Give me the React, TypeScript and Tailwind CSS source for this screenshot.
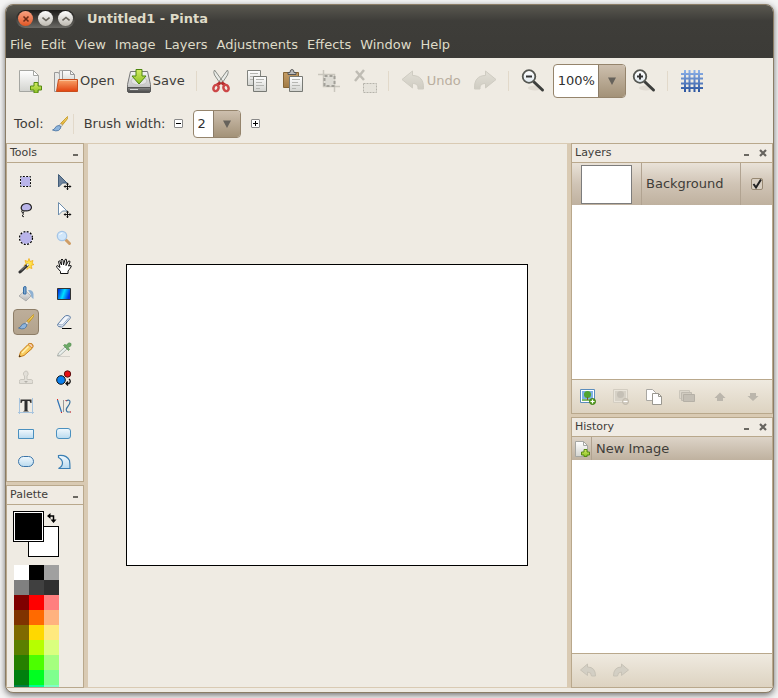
import type { ReactNode } from "react";

type IconProps = { children: ReactNode; size?: 16 | 24 };

function Icon({ children, size = 16 }: IconProps) {
  return (
    <svg
      className={size === 24 ? "size-6 shrink-0" : "size-4 shrink-0"}
      viewBox={size === 24 ? "0 0 24 24" : "0 0 16 16"}
      fill="none"
      aria-hidden="true"
    >
      {children}
    </svg>
  );
}

function Gradients() {
  const list: [string, string, string][] = [
    ["paper", "#ffffff", "#d2d3cf"],
    ["orange", "#f9a56b", "#e2430f"],
    ["green", "#d4ec62", "#8bc024"],
    ["metal", "#f4f4f4", "#b4b4b4"],
    ["dark", "#8a8a8a", "#454545"],
    ["lens", "#ffffff", "#dfe8ee"],
    ["board", "#c59d66", "#a07a44"],
    ["gridblue", "#8fb3ea", "#2c559f"],
    ["sky", "#f2f9fd", "#b9daef"],
    ["fade", "#e2dfd6", "#cfccc2"],
    ["gold", "#fbe27c", "#dca62a"],
  ];
  return (
    <svg className="absolute size-0" aria-hidden="true">
      <defs>
        {list.map(([id, a, b]) => (
          <linearGradient key={id} id={id} x1="0" y1="0" x2="0" y2="1">
            <stop offset="0" stopColor={a} />
            <stop offset="1" stopColor={b} />
          </linearGradient>
        ))}
        <linearGradient id="spectrum" x1="0" y1="0" x2="1" y2="0.3">
          <stop offset="0" stopColor="#0008d8" />
          <stop offset="0.55" stopColor="#00e0ff" />
          <stop offset="1" stopColor="#0030e8" />
        </linearGradient>
      </defs>
    </svg>
  );
}

/* ---------- toolbar icons ---------- */

const NewIcon = (
  <Icon size={24}>
    <path d="M1.500 1.500h14l5 5v16h-19z" fill="url(#paper)" stroke="#a5a6a2" />
    <path d="M15.500 1.500v5h5z" fill="#fff" stroke="#a5a6a2" strokeLinejoin="round" />
    <path d="M16 13.500h4v3.500h3.500v4H20v3h-4v-3h-3.500v-4H16z" fill="url(#green)" stroke="#568a12" />
  </Icon>
);
const OpenIcon = (
  <Icon size={24}>
    <path d="M.5 3.500h4l1 2h3v17h-8z" fill="#e8e8e6" stroke="#999" />
    <path d="M5.500 1.500h9v12h-9z" fill="#eee" stroke="#aaa" />
    <path d="M8.500 1.500h8l4 4v8h-12z" fill="url(#paper)" stroke="#999" />
    <path d="M16.500 1.500v4h4" stroke="#999" />
    <path d="M4.500 10.500h19v12h-21z" fill="url(#orange)" stroke="#c84d1c" />
    <path d="M5.500 11.500h17" stroke="#fbc49c" />
  </Icon>
);
const SaveIcon = (
  <Icon size={24}>
    <path d="M3.500 2.500h17l3 13v6q0 2-2 2h-19q-2 0-2-2v-6z" fill="url(#metal)" stroke="#777" />
    <path d="M.5 18.500h23v3q0 2-2 2h-19q-2 0-2-2z" fill="url(#dark)" stroke="#555" />
    <path d="M3 20.500h8" stroke="#d8d8d8" />
    <ellipse cx="12" cy="12" rx="8" ry="4" fill="#e4e4e4" stroke="#c2c2c2" />
    <path d="M9 .5h6V7h4l-7 8-7-8h4z" fill="url(#green)" stroke="#4d860c" />
  </Icon>
);
const CutIcon = (
  <Icon size={24}>
    <path d="M5.500 1q-1.500 2 0 5l6 9 2-3zM18.500 1q1.500 2 0 5l-6 9-2-3z" fill="#e9ebe7" stroke="#8b8e88" />
    <path d="m11.500 13.500-4 3M12.500 13.500l4 3" stroke="#b82c2c" strokeWidth="3" />
    <ellipse cx="7" cy="19" rx="2.500" ry="3.200" transform="rotate(25 7 19)" stroke="#cc4747" strokeWidth="2.500" />
    <ellipse cx="17" cy="19" rx="2.500" ry="3.200" transform="rotate(-25 17 19)" stroke="#cc4747" strokeWidth="2.500" />
  </Icon>
);
const CopyIcon = (
  <Icon size={24}>
    <path d="M2.500 1.500h13v15h-13z" fill="url(#paper)" stroke="#81837e" />
    <path d="M5 4.500h8M5 7.500h6M5 10.500h3" stroke="#b5b6b2" />
    <path d="M8.500 7.500h13v15h-13z" fill="url(#paper)" stroke="#777974" />
    <path d="M11 10.500h8M11 13.500h6M11 16.500h8M11 19.500h4" stroke="#b5b6b2" />
  </Icon>
);
const PasteIcon = (
  <Icon size={24}>
    <path d="M2.500 3.500h15v15h-15z" fill="url(#board)" stroke="#856434" />
    <path d="M7 5.500v-2h2q0-3 2-3t2 3h2v2z" fill="#bbb" stroke="#555" />
    <path d="M8.500 7.500h13v15h-13z" fill="url(#paper)" stroke="#777974" />
    <path d="M11 10.500h8M11 13.500h6M11 16.500h8M11 19.500h4" stroke="#b5b6b2" />
  </Icon>
);
const CropIcon = (
  <Icon size={24}>
    <path d="M1 5.500h16.500V23M6.500 1v16.500H23" stroke="#c9c6bd" strokeWidth="1.500" />
    <rect x="7.500" y="7" width="10" height="10" fill="#dddbd4" stroke="#a3a19a" strokeWidth="2" strokeDasharray="3 2" />
  </Icon>
);
const DeselectIcon = (
  <Icon size={24}>
    <path d="m3 2 8 9M11 1 2 12" stroke="#bfbcb4" strokeWidth="2.500" />
    <rect x="10.500" y="14.500" width="13" height="9" fill="#e6e3db" stroke="#b5b2aa" strokeDasharray="2 1" />
  </Icon>
);
const arrowPath = "M1 10.500 11.500 2V6.500C19 6.500 23 11 22.500 20H17c0-4-1.500-5.500-5.500-5.500V19z";
const UndoIcon = (
  <Icon size={24}>
    <path d={arrowPath} fill="url(#fade)" stroke="#cfccc2" strokeLinejoin="round" />
  </Icon>
);
const RedoIcon = (
  <Icon size={24}>
    <path d={arrowPath} transform="translate(24) scale(-1 1)" fill="url(#fade)" stroke="#cfccc2" strokeLinejoin="round" />
  </Icon>
);
function Magnifier({ plus }: { plus: boolean }) {
  return (
    <Icon size={24}>
      <ellipse cx="14" cy="19" rx="7" ry="2.500" fill="#e0dbd2" />
      <path d="m13 13 8.500 8" stroke="#3c3e3c" strokeWidth="3" strokeLinecap="round" />
      <circle cx="8" cy="7.500" r="6.300" fill="url(#lens)" stroke="#555752" strokeWidth="1.800" />
      <path d={plus ? "M5 7.500h6M8 4.500v6" : "M5 7.500h6"} stroke="#333" strokeWidth="2" />
    </Icon>
  );
}
const GridIcon = (
  <Icon size={24}>
    <path
      d="M4 1h2v22H4zM8.500 1h2v22h-2zM13.500 1h2v22h-2zM18 1h2v22h-2zM1 4h22v2H1zM1 8.500h22v2H1zM1 13.500h22v2H1zM1 18h22v2H1z"
      fill="url(#gridblue)"
    />
  </Icon>
);

/* ---------- tool icons ---------- */

const cursorCross = (
  <>
    <path d="M8 12.500h7M11.500 9v7" stroke="#111" />
    <path d="M10 10.500 11.500 8.500l1.500 2zM10 14.500l1.500 1.500 1.500-1.500zM9.500 11l-2 1.500 2 1.500zM13.500 11l2 1.500-2 1.500z" fill="#111" />
  </>
);
const BrushIcon = (
  <Icon>
    <path d="M15.500.5q1 1-1 3.500l-4.500 5.500L8 8z" fill="url(#gold)" stroke="#bf921e" strokeWidth=".8" />
    <path d="m8.500 7.500 2 1.500-1.500 2L7 9.500z" fill="#e4e4e4" stroke="#999" strokeWidth=".5" />
    <path d="M7 9.500Q4 9.500 3 12q-.5 1.500-2.500 2 3.500 1.500 6 .5 2-1 2.500-4z" fill="#8fb5dc" stroke="#44709f" strokeWidth=".8" />
  </Icon>
);

const tools: { name: string; icon: ReactNode; off?: boolean }[] = [
  {
    name: "Rectangle Select",
    icon: (
      <Icon>
        <path d="M2.500 2.500h10v10h-10z" fill="#b9b4ea" stroke="#fff" />
        <path d="M2.500 2.500h10v10h-10z" stroke="#000" strokeDasharray="2 1.330" strokeDashoffset="1" />
      </Icon>
    ),
  },
  {
    name: "Move Selected Pixels",
    icon: (
      <Icon>
        <path d="M2.500.5 11 9H6.500l-4 4z" fill="#6d829b" stroke="#415c78" />
        {cursorCross}
      </Icon>
    ),
  },
  {
    name: "Lasso Select",
    icon: (
      <Icon>
        <path d="M4 8Q2 5 5 2.500q4-2 7 0 3 3 0 5.500-3 1.500-7 .5z" fill="#b9b4ea" stroke="#222" strokeWidth="1.200" />
        <path d="M5 8.500q2 1 0 2.500-2-.5-1-2.500M5 11q1 2-1 3 1 0 2 1" stroke="#222" />
      </Icon>
    ),
  },
  {
    name: "Move Selection",
    icon: (
      <Icon>
        <path d="M2.500.5 11 9H6.500l-4 4z" fill="#fff" stroke="#6d8dac" />
        {cursorCross}
      </Icon>
    ),
  },
  {
    name: "Ellipse Select",
    icon: (
      <Icon>
        <circle cx="8" cy="8" r="6.500" fill="#b9b4ea" stroke="#fff" />
        <circle cx="8" cy="8" r="6.500" stroke="#000" strokeWidth="1.200" strokeDasharray="2 1.400" />
      </Icon>
    ),
  },
  {
    name: "Zoom",
    icon: (
      <Icon>
        <path d="m10 10 3.500 3.500" stroke="#cf9d66" strokeWidth="3" strokeLinecap="round" />
        <circle cx="6" cy="6" r="4.700" fill="#d0e6fa" stroke="#a5c5e6" strokeWidth="1.300" />
        <path d="M3.500 5q1-2 3-2" stroke="#fff" />
      </Icon>
    ),
  },
  {
    name: "Magic Wand",
    icon: (
      <Icon>
        <path d="m11 .500 1 3 3-1-1 3 2 1-3 1 1 3-3-1-2 2v-3l-3-1 2-2-1-3 3 1z" fill="#ffe34a" stroke="#f2ad16" strokeWidth=".8" />
        <path d="m2 14 7.500-7" stroke="#333" strokeWidth="3" strokeLinecap="round" />
        <path d="m3 12.500 4.500-4.500" stroke="#999" />
        <path d="m9 7.500 1.500-1.500" stroke="#eee" strokeWidth="2" />
      </Icon>
    ),
  },
  {
    name: "Pan",
    icon: (
      <Icon>
        <path
          d="M4.500 15.500v-2L1 9.500q-1-2 .5-2L4 9.500 2.500 3.500q.5-1.500 1.500 0L5.500 7 5 2q1-2 2 0l.5 5L9 1.500q1.500-1 1.500.5L10 7.500 12.500 3q1.500-.5 1.500 1l-1.500 4 1.500-.5q2 0 1 1.500-2 3-3 4v2.500z"
          fill="#fff"
          stroke="#111"
        />
      </Icon>
    ),
  },
  {
    name: "Paint Bucket",
    icon: (
      <Icon>
        <path d="M10 4q5-.5 5.500 4v5q-2.500-1-3-5z" fill="#8fb1d2" />
        <path d="m7 4.500 6 5.500L8 15 1 10z" fill="url(#metal)" stroke="#a5a5a5" strokeWidth=".8" />
        <path d="M5.500 8V2Q5.500.5 7 .5T8 2v6z" fill="#7da7cf" stroke="#376da4" />
      </Icon>
    ),
  },
  {
    name: "Gradient",
    icon: (
      <Icon>
        <path d="M1.500 2.500h13v11h-13z" fill="url(#spectrum)" stroke="#333" />
      </Icon>
    ),
  },
  { name: "Paintbrush", icon: BrushIcon },
  {
    name: "Eraser",
    icon: (
      <Icon>
        <path d="M6 14.500h9.500" stroke="#000" />
        <path d="m1.500 10.500 6.500-7.500q1.500-1.500 3-1.500l2.500.5q1.500 1 .5 2.500L7.500 12q-1 1-2 1l-3-.500q-1-1-1-2z" fill="#f2f5fa" stroke="#5b7ba4" />
        <path d="m1.500 10.500 5 .5L13 3.500" stroke="#7e97b8" strokeWidth=".8" />
      </Icon>
    ),
  },
  {
    name: "Pencil",
    icon: (
      <Icon>
        <path d="m1 15 1.500-5L10 2.500q1-1.500 3-1t2 2q0 2-1 3L6 13.500z" fill="#f9cd61" stroke="#c77b16" />
        <path d="m10 2.500 4 3.500q1.500-1.500.5-3-1.500-2-3-1.500z" fill="#f6cdb0" stroke="#c77b16" strokeWidth=".7" />
        <path d="m4 11 6.500-6.500" stroke="#fff1b4" strokeWidth="1.500" />
        <path d="m1 15 .5-2 1.500 1.500z" fill="#222" />
      </Icon>
    ),
  },
  {
    name: "Color Picker",
    icon: (
      <Icon>
        <path d="M2 14.500h12" stroke="#d4d1ca" />
        <path d="m1.500 14 1-3L9 5l2 2-6.500 6z" fill="#e9efec" stroke="#a5aba6" strokeWidth=".9" />
        <path d="m7.500 3.500 5 5 1-1-1.500-2q4-1 3-4-2-2-4.500 1.500L8.500 2.500z" fill="#6eaa68" stroke="#5a9256" strokeWidth=".7" />
      </Icon>
    ),
  },
  {
    name: "Clone Stamp",
    off: true,
    icon: (
      <Icon>
        <path d="M6.500 9.500V6Q5 5 5.500 3q1-2 2.500-2t2 2q.5 2-1 3v3.500h4.500q1 0 1 2v2h-13v-2q0-2 1-2z" fill="#e2dfd8" stroke="#c9c6be" />
        <path d="M6 11h4l-2 2z" fill="#b3b1aa" />
      </Icon>
    ),
  },
  {
    name: "Recolor",
    icon: (
      <Icon>
        <circle cx="11.500" cy="4" r="3.200" fill="#e50e12" stroke="#5c1011" />
        <circle cx="5" cy="10" r="4.300" fill="#0b80ee" stroke="#111" />
        <path d="M13 9q2.500 2 0 4.500h-2.500M12 11.500l-2 2 2 2" stroke="#111" strokeWidth="1.300" />
      </Icon>
    ),
  },
  {
    name: "Text",
    icon: (
      <Icon>
        <path d="M1.500 0v16M14.500 0v16M0 14.500h16" stroke="#a7c4de" />
        <path d="M2.500 1.500h11V5h-1l-1-2H9.500v9.500l1.500 1h-6l1.500-1V3H4.500l-1 2h-1z" fill="#2d2d2d" />
      </Icon>
    ),
  },
  {
    name: "Line / Curve",
    icon: (
      <Icon>
        <path d="m1.500 2 4 12" stroke="#2c71b5" strokeWidth="1.200" />
        <path d="M7.500 2v12" stroke="#999" />
        <path d="M10 3q4-2 4 1 0 2-2.500 5t0 5h3" stroke="#39729f" strokeWidth="1.200" />
        <path d="M1 1h1v1H1zM5 14h1v1H5zM9.500 2h1v1h-1zM14 13.500h1v1h-1z" fill="#d22" />
      </Icon>
    ),
  },
  {
    name: "Rectangle",
    icon: (
      <Icon>
        <path d="M.5 3.500h15v9H.5z" fill="url(#sky)" stroke="#4a90bf" />
      </Icon>
    ),
  },
  {
    name: "Rounded Rectangle",
    icon: (
      <Icon>
        <rect x=".5" y="2.500" width="14" height="10" rx="2.500" fill="url(#sky)" stroke="#4a90bf" />
      </Icon>
    ),
  },
  {
    name: "Ellipse",
    icon: (
      <Icon>
        <rect x=".5" y="2.500" width="15" height="10" rx="5" fill="url(#sky)" stroke="#3a74a8" />
      </Icon>
    ),
  },
  {
    name: "Freeform Shape",
    icon: (
      <Icon>
        <path d="M2.500 1.500q8-1 11 5 .5 3 .5 8H2.500q4-2 4-5.500t-4-5.500z" fill="url(#sky)" stroke="#3a7fb4" strokeWidth="1.200" />
      </Icon>
    ),
  },
];

/* ---------- panel icons ---------- */

const DocAddIcon = (
  <Icon>
    <path d="M1.500.5h8l4 4v11h-12z" fill="url(#paper)" stroke="#a5a6a2" />
    <path d="M9.500.5v4h4" stroke="#a5a6a2" />
    <path d="M10 8.500h3V11h2.500v3H13v1.500h-3V14H7.500v-3H10z" fill="url(#green)" stroke="#568a12" />
  </Icon>
);
const LayerAddIcon = (
  <Icon>
    <path d="M.5.500h14v13H.5z" fill="#fff" stroke="#5b8dbd" />
    <path d="M2 2h11v10H2z" fill="#7fb0e4" />
    <path d="M2 10h11v2H2z" fill="#7fb86a" />
    <circle cx="7.500" cy="5.500" r="3.500" fill="#51a52e" />
    <path d="M7 8h1v3H7z" fill="#7b5a28" />
    <circle cx="12.500" cy="12.500" r="3" fill="#5fa526" stroke="#3d7d14" />
    <path d="M10.500 12.500h4M12.500 10.500v4" stroke="#fff" strokeWidth="1.200" />
  </Icon>
);
const LayerRemoveIcon = (
  <Icon>
    <path d="M.5.500h14v13H.5z" fill="#e9e4da" stroke="#d3cdc1" />
    <path d="M2 2h11v10H2z" fill="#d6d1c6" />
    <circle cx="7.500" cy="5.500" r="3.500" fill="#c5c0b6" />
    <circle cx="12.500" cy="12.500" r="3" fill="#d2ccc0" stroke="#bfb8ab" />
    <path d="M10.500 12.500h4" stroke="#fff" />
  </Icon>
);
const DuplicateIcon = (
  <Icon>
    <path d="M.5.500h6l3 3v8h-9z" fill="#fff" stroke="#aaa8a3" />
    <path d="M6.500 4.500h6l3 3v8h-9z" fill="#fff" stroke="#99978f" />
    <path d="M12.500 4.500v3h3" stroke="#99978f" />
  </Icon>
);
const MergeIcon = (
  <Icon>
    <path d="M.5 1.500h10v8H.5z" fill="#dcd7cc" stroke="#cbc6bb" />
    <path d="M2.500 3.500h10v8h-10z" fill="#d0cbc0" stroke="#bfbab0" />
    <path d="M4.500 5.500h11v7h-11z" fill="#c4bfb5" stroke="#b5b0a6" />
  </Icon>
);
const UpIcon = (
  <Icon>
    <path d="m8 3.500 5.500 5.500H11v3H5V9H2.500z" fill="#bbb6ac" />
  </Icon>
);
const DownIcon = (
  <Icon>
    <path d="M8 12 2.500 7H5V4h6v3h2.500z" fill="#bbb6ac" />
  </Icon>
);
const smallArrow = "M.5 7 7.500 1v3q8 0 8 9h-4q0-4-4-4v3.500z";
const SmallUndo = (
  <Icon>
    <path d={smallArrow} fill="#d3cfc4" stroke="#c7c2b6" />
  </Icon>
);
const SmallRedo = (
  <Icon>
    <path d={smallArrow} transform="translate(16) scale(-1 1)" fill="#d3cfc4" stroke="#c7c2b6" />
  </Icon>
);

/* ---------- building blocks ---------- */

function ToolButton({ label, icon, text, off }: { label: string; icon: ReactNode; text?: string; off?: boolean }) {
  return (
    <button
      type="button"
      aria-label={label}
      disabled={off}
      className="flex h-9 shrink-0 items-center gap-0.5 px-1.5 text-[#3f3d39] disabled:text-[#b9ae9f]"
    >
      {icon}
      {text && <span>{text}</span>}
    </button>
  );
}

function Separator() {
  return (
    <div className="flex h-5 w-3 shrink-0 justify-center">
      <div className="w-px bg-[#e2d9ca]" />
    </div>
  );
}

function Combo({ label, value, options, wide }: { label: string; value: string; options: string[]; wide?: boolean }) {
  return (
    <div
      className={
        "relative shrink-0 overflow-hidden rounded border border-[#95846c] bg-white " + (wide ? "h-[34px] w-[73px]" : "h-7 w-12")
      }
    >
      <select aria-label={label} defaultValue={value} className="h-full w-full appearance-none bg-transparent pl-1 text-[#2f2f2f] outline-none">
        {options.map((o) => (
          <option key={o}>{o}</option>
        ))}
      </select>
      <div className="pointer-events-none absolute inset-y-0 right-0 flex w-[27px] items-center justify-center border-l border-[#8b7c68] bg-linear-to-b from-[#cdbfae] to-[#a39278]">
        <svg className="size-2" viewBox="0 0 8 8" aria-hidden="true">
          <path d="M0 .5h8L4 8z" fill="#66625b" />
        </svg>
      </div>
    </div>
  );
}

function StepButton({ label, d }: { label: string; d: string }) {
  return (
    <button type="button" aria-label={label} className="flex size-[9px] shrink-0 items-center justify-center rounded-[1px] border border-[#888] bg-white">
      <svg className="size-[7px] shrink-0" viewBox="0 0 7 7" aria-hidden="true">
        <path d={d} fill="#000" />
      </svg>
    </button>
  );
}

function PanelHeader({ title, closable }: { title: string; closable?: boolean }) {
  return (
    <header className="flex h-5 shrink-0 items-center gap-2.5 border-y border-[#b9a88c] bg-[#f0ebe3] pr-[5px] pl-[3px] text-[11px] leading-4">
      <h2 className="flex-1">{title}</h2>
      <button type="button" aria-label={"Minimise " + title} className="flex h-1.5 w-[5px] items-end">
        <span className="h-0.5 w-full bg-[#6b6862]" />
      </button>
      {closable && (
        <button type="button" aria-label={"Close " + title}>
          <svg className="size-2" viewBox="0 0 8 8" aria-hidden="true">
            <path d="m1 1 6 6M7 1 1 7" stroke="#66635e" strokeWidth="2.200" />
          </svg>
        </button>
      )}
    </header>
  );
}

function SmallButton({ label, icon, off }: { label: string; icon: ReactNode; off?: boolean }) {
  return (
    <button type="button" aria-label={label} disabled={off} className="flex h-8 w-[33px] items-center pl-2">
      {icon}
    </button>
  );
}

function WindowButton({ label, close, d }: { label: string; close?: boolean; d: string }) {
  return (
    <button
      type="button"
      aria-label={label}
      className={
        "flex size-[15px] items-center justify-center rounded-full bg-linear-to-b " +
        (close ? "from-[#f8a181] to-[#e0551f]" : "from-white to-[#bdb9b0]")
      }
    >
      <svg className="size-2" viewBox="0 0 8 8" fill="none" aria-hidden="true">
        <path d={d} stroke={close ? "#6b2b17" : "#66625a"} strokeWidth="1.600" />
      </svg>
    </button>
  );
}

const menus = ["File", "Edit", "View", "Image", "Layers", "Adjustments", "Effects", "Window", "Help"];

const palette = [
  "#ffffff", "#000000", "#a0a0a0",
  "#808080", "#404040", "#303030",
  "#7f0000", "#ff0000", "#ff7f7f",
  "#7f3300", "#ff6a00", "#ffb27f",
  "#7f6a00", "#ffd800", "#ffe97f",
  "#5b7f00", "#b6ff00", "#daff7f",
  "#267f00", "#4cff00", "#a5ff7f",
  "#007f0e", "#00ff21", "#7fff8e",
  "#007f46", "#00ff90", "#7fffc5",
];

export default function App() {
  return (
    <div className="h-screen bg-[#f4f4f4] pt-1 pr-1 pb-[5px] pl-[5px] font-['DejaVu_Sans','Liberation_Sans',sans-serif] text-[13px] leading-5 text-[#3f3d39]">
      <Gradients />
      <div className="flex h-full flex-col overflow-hidden rounded-lg border border-[#8b7d66] bg-[#efebe3] shadow-[0_2px_6px_rgba(0,0,0,0.55)]">
        <div className="shrink-0 bg-linear-to-b from-[#5a5850] via-[#3e3d39] via-30% to-[#3c3b37] text-[#dfdbc8]">
          <div className="flex h-[27px] items-center gap-3 pl-2.5">
            <div className="flex h-[18px] items-center gap-[5px] rounded-full bg-linear-to-b from-[#1d1c1a] to-[#6b6a65] px-0.5">
              <WindowButton label="Close" close d="m1.500 1.500 5 5M6.500 1.500l-5 5" />
              <WindowButton label="Minimise" d="m.5 2.500 3.500 3 3.500-3" />
              <WindowButton label="Maximise" d="m.5 5.500 3.500-3 3.500 3" />
            </div>
            <h1 className="font-bold">Untitled1 - Pinta</h1>
          </div>
          <nav className="flex h-[26px] items-center gap-px">
            {menus.map((m) => (
              <button key={m} type="button" className="px-1">
                {m}
              </button>
            ))}
          </nav>
        </div>

        <div className="flex h-[46px] shrink-0 items-center pl-1.5">
          <ToolButton label="New" icon={NewIcon} />
          <ToolButton label="Open" icon={OpenIcon} text="Open" />
          <ToolButton label="Save" icon={SaveIcon} text="Save" />
          <Separator />
          <ToolButton label="Cut" icon={CutIcon} />
          <ToolButton label="Copy" icon={CopyIcon} />
          <ToolButton label="Paste" icon={PasteIcon} />
          <ToolButton label="Crop to Selection" icon={CropIcon} off />
          <ToolButton label="Deselect" icon={DeselectIcon} off />
          <Separator />
          <ToolButton label="Undo" icon={UndoIcon} text="Undo" off />
          <ToolButton label="Redo" icon={RedoIcon} off />
          <Separator />
          <ToolButton label="Zoom Out" icon={<Magnifier plus={false} />} />
          <div className="pl-0.5">
            <Combo label="Zoom" value="100%" options={["200%", "100%", "50%"]} wide />
          </div>
          <ToolButton label="Zoom In" icon={<Magnifier plus />} />
          <Separator />
          <ToolButton label="Pixel Grid" icon={GridIcon} />
        </div>

        <div className="flex h-[39px] shrink-0 items-center pl-2">
          <span className="pr-2">Tool:</span>
          {BrushIcon}
          <Separator />
          <span className="pr-2 pl-1">Brush width:</span>
          <StepButton label="Decrease brush width" d="M1 3h5v1H1z" />
          <div className="px-2.5">
            <Combo label="Brush width" value="2" options={["1", "2", "3", "4", "5"]} />
          </div>
          <StepButton label="Increase brush width" d="M3 1h1v2h2v1H4v2H3V4H1V3h2z" />
        </div>

        <div className="flex min-h-0 flex-1">
          <aside className="flex w-[82px] shrink-0 flex-col gap-[3px] border-r-4 border-[#d9cab3] bg-[#d9cab3]">
            <section className="shrink-0 border-x border-b border-[#b9a88c] bg-[#efebe3]">
              <PanelHeader title="Tools" />
              <div className="grid grid-cols-2 py-[5px]">
                {tools.map((t) => (
                  <div key={t.name} className="flex h-7 items-center justify-center">
                    <button
                      type="button"
                      aria-label={t.name}
                      disabled={t.off}
                      className={
                        "flex size-[26px] items-center justify-center rounded border " +
                        (t.name === "Paintbrush"
                          ? "border-[#8d7d67] bg-linear-to-b from-[#bdae9a] to-[#b3a38d]"
                          : "border-transparent")
                      }
                    >
                      {t.icon}
                    </button>
                  </div>
                ))}
              </div>
            </section>
            <section className="flex min-h-0 flex-1 flex-col overflow-hidden border-x border-b border-[#b9a88c] bg-[#efebe3]">
              <PanelHeader title="Palette" />
              <div className="relative mt-1.5 ml-1.5 h-[54px] w-[46px] shrink-0">
                <button type="button" aria-label="Secondary color" className="absolute top-[15px] left-[15px] size-[31px] border border-black bg-white" />
                <button type="button" aria-label="Primary color" className="absolute top-0 left-0 size-[31px] border border-black bg-black outline-1 -outline-offset-2 outline-white" />
                <button type="button" aria-label="Swap colors" className="absolute top-0.5 left-[34px]">
                  <svg className="size-2.5" viewBox="0 0 10 10" fill="none" aria-hidden="true">
                    <path d="M2 3h4.500v4" stroke="#000" strokeWidth="1.500" />
                    <path d="M0 3 3.500 0v6zM6.500 10l-3-3.500h6z" fill="#000" />
                  </svg>
                </button>
              </div>
              <div className="ml-[7px] grid min-h-0 w-[45px] flex-1 auto-rows-[15px] grid-cols-3 overflow-hidden">
                {palette.map((c) => (
                  <button key={c} type="button" aria-label={"Color " + c} style={{ backgroundColor: c }} />
                ))}
              </div>
            </section>
          </aside>

          <main className="flex min-w-0 flex-1 items-center justify-center border-y border-[#d9cab3] pr-0.5 pb-0.5">
            <div className="h-[302px] w-[402px] shrink-0 border border-black bg-white" />
          </main>

          <aside className="flex w-[206px] shrink-0 flex-col gap-[3px] border-l-4 border-[#d9cab3] bg-[#d9cab3]">
            <section className="flex h-[271px] shrink-0 flex-col border-x border-b border-[#b9a88c] bg-white">
              <PanelHeader title="Layers" closable />
              <label className="flex h-[42px] shrink-0 items-stretch bg-linear-to-b from-[#e9e2d8] via-[#d0c4b5] to-[#bfb19f]">
                <span className="flex w-[69px] items-center justify-center">
                  <span className="h-[39px] w-[51px] border border-[#7c7c7c] bg-white" />
                </span>
                <span className="flex flex-1 items-center border-x border-[#b1a391] pl-1">Background</span>
                <span className="flex w-[31px] items-center justify-center">
                  <span className="relative flex size-3">
                    <input type="checkbox" defaultChecked className="size-3 appearance-none rounded-[2px] border border-[#978872] bg-[#d9cfc2]" />
                    <svg className="pointer-events-none absolute inset-0 size-3" viewBox="0 0 12 12" fill="none" aria-hidden="true">
                      <path d="m2.500 6 2.500 3.500L10 1.500" stroke="#222" strokeWidth="2" />
                    </svg>
                  </span>
                </span>
              </label>
              <div className="flex-1" />
              <div className="flex h-[34px] shrink-0 items-center border-t border-[#b9a88c] bg-linear-to-b from-[#efeae0] to-[#ddd3c1]">
                <SmallButton label="Add layer" icon={LayerAddIcon} />
                <SmallButton label="Delete layer" icon={LayerRemoveIcon} off />
                <SmallButton label="Duplicate layer" icon={DuplicateIcon} />
                <SmallButton label="Merge layer down" icon={MergeIcon} off />
                <SmallButton label="Move layer up" icon={UpIcon} off />
                <SmallButton label="Move layer down" icon={DownIcon} off />
              </div>
            </section>
            <section className="flex min-h-0 flex-1 flex-col border-x border-b border-[#b9a88c] bg-white">
              <PanelHeader title="History" closable />
              <div className="flex h-[23px] shrink-0 items-stretch bg-linear-to-b from-[#ddd4c8] to-[#bfb19f]">
                <span className="flex w-5 items-center justify-center border-r border-[#b1a391]">{DocAddIcon}</span>
                <span className="flex items-center pl-1">New Image</span>
              </div>
              <div className="flex-1" />
              <div className="flex h-[34px] shrink-0 items-center border-t border-[#b9a88c] bg-linear-to-b from-[#efeae0] to-[#ddd3c1]">
                <SmallButton label="Undo step" icon={SmallUndo} off />
                <SmallButton label="Redo step" icon={SmallRedo} off />
              </div>
            </section>
          </aside>
        </div>
        <div className="h-1 shrink-0" />
      </div>
    </div>
  );
}
